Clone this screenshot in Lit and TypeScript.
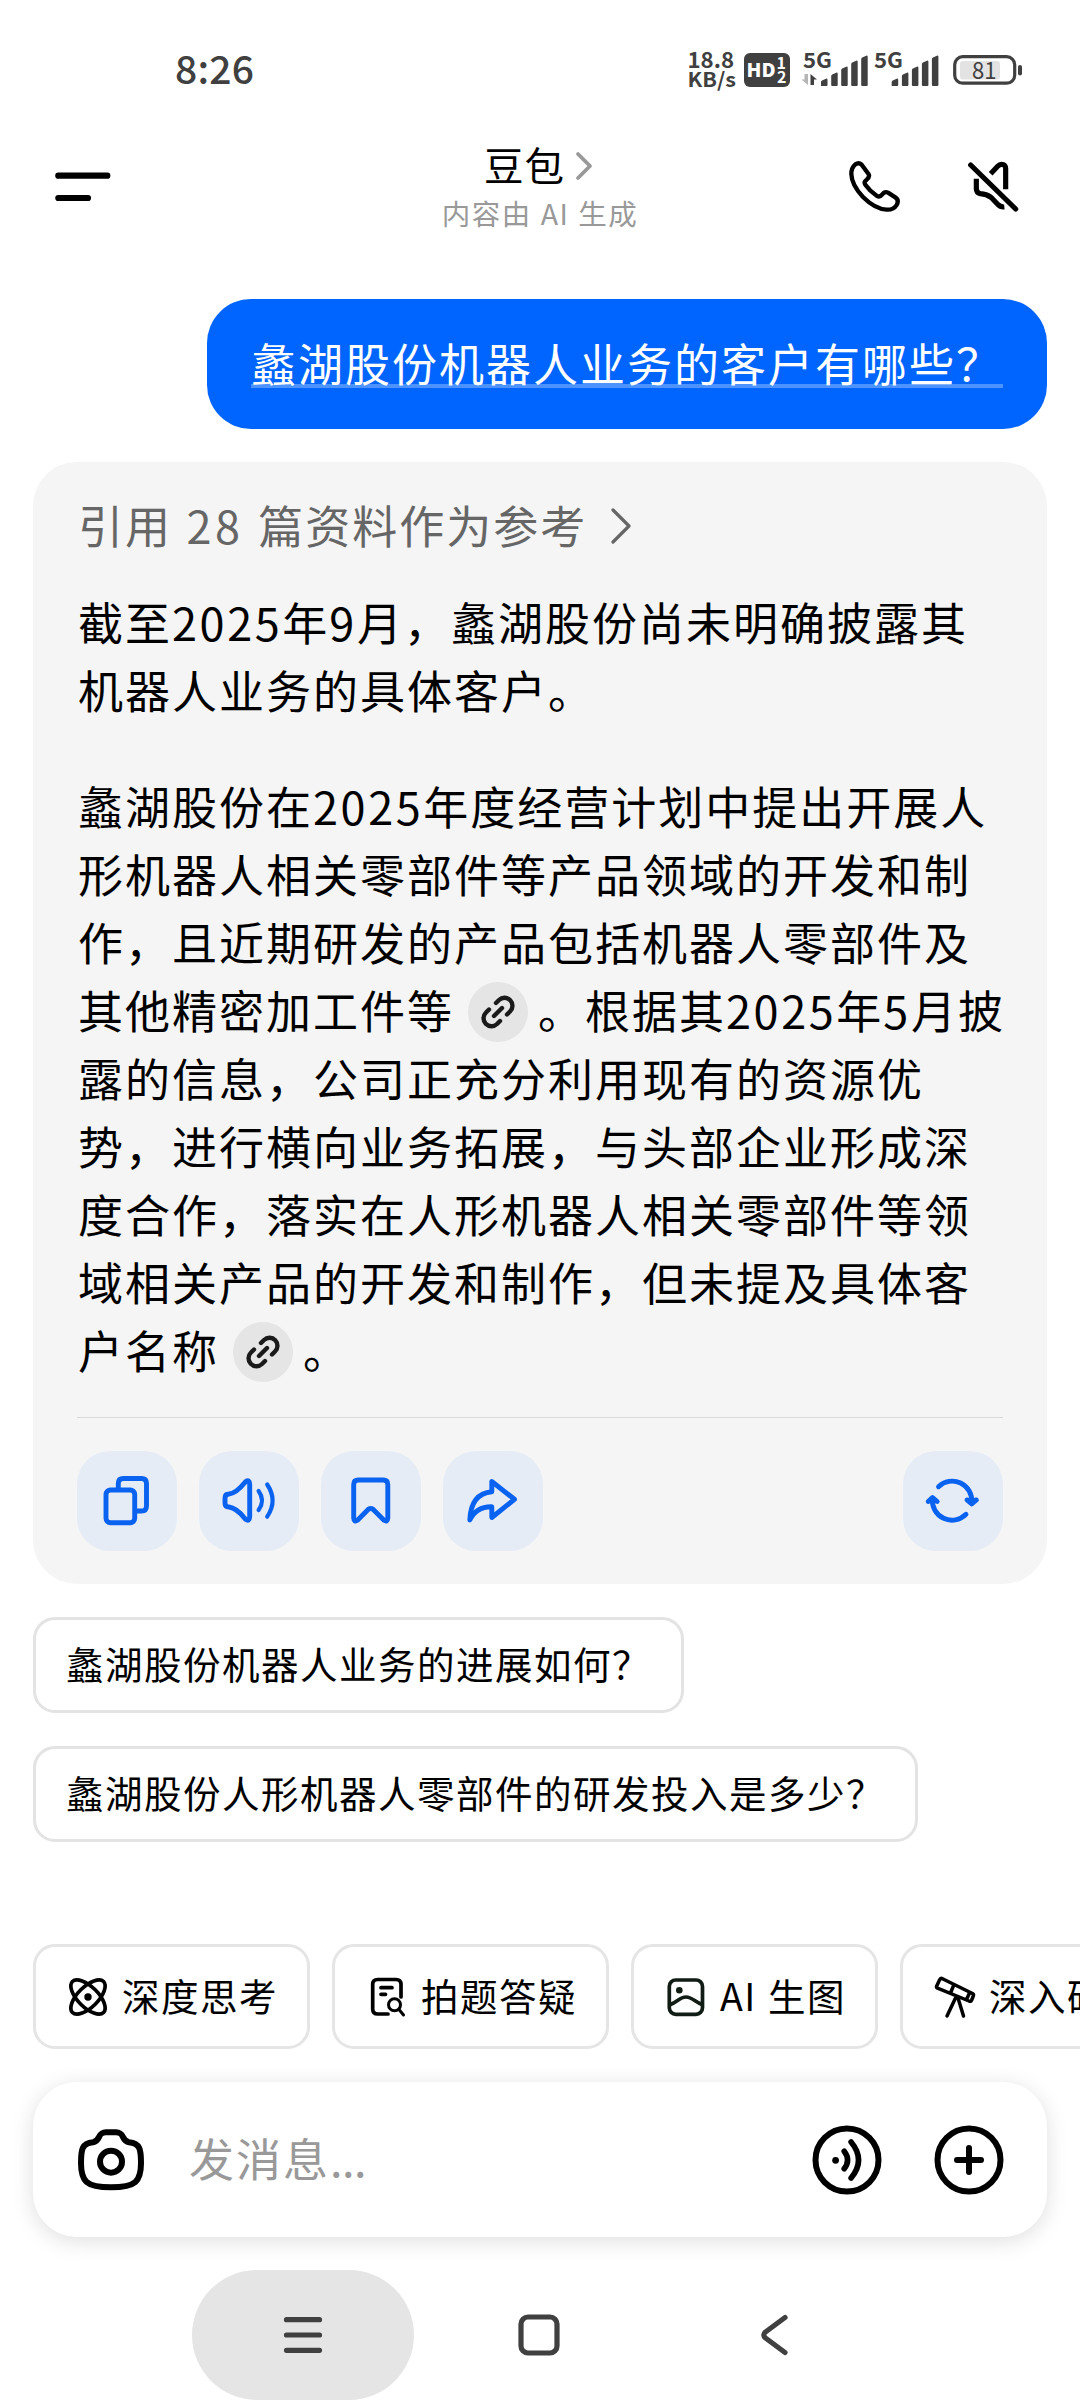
import { LitElement, html, svg, css } from "lit";
import { customElement, property } from "lit/decorators.js";

const signal = (x: number) => svg`
  <path fill="#404040" d="M${x} 86 v-4 q0-1 1-1.5 l4-1.8 q1.5-.4 1.5 1 V85 q0 1-1 1z
    M${x + 10.2} 85 v-9 q0-1 1-1.5 l4-1.8 q1.5-.4 1.5 1 V85 q0 1-1 1 h-4.5 q-1 0-1-1z
    M${x + 20.2} 85 v-15 q0-1 1-1.5 l4-1.8 q1.5-.4 1.5 1 V85 q0 1-1 1 h-4.5 q-1 0-1-1z
    M${x + 30.2} 85 v-21 q0-1 1-1.5 l4-1.8 q1.5-.4 1.5 1 V85 q0 1-1 1 h-4.5 q-1 0-1-1z
    M${x + 40.2} 85 v-26 q0-1 1-1.5 l4-1.8 q1.5-.4 1.5 1 V85 q0 1-1 1 h-4.5 q-1 0-1-1z"/>`;

@customElement("status-bar")
class StatusBar extends LitElement {
  static styles = css`
    :host { display: flex; justify-content: space-between; height: 140px; padding: 0 54px 0 175px;
      box-sizing: border-box; color: #404040; font-family: "Noto Sans CJK SC", sans-serif; }
    .time { font-size: 39px; font-weight: 500; line-height: 135px; letter-spacing: 0.2px; }
    .tray { display: block; width: 341px; height: 140px; }
    .tray text { font-family: "Noto Sans CJK SC", sans-serif; fill: #404040; }
    .tray .inverse { fill: #fff; }
  `;
  render() {
    return html`
      <div class="time">8:26</div>
      <svg class="tray" viewBox="685 0 341 140">
        <text x="687.5" y="68" font-size="22" font-weight="700" textLength="46.5" lengthAdjust="spacingAndGlyphs">18.8</text>
        <text x="687.5" y="86.5" font-size="20" font-weight="700" textLength="48.5" lengthAdjust="spacingAndGlyphs">KB/s</text>
        <rect x="744" y="53" width="46" height="34" rx="6" fill="#404040"/>
        <text class="inverse" x="746.5" y="77" font-size="19" font-weight="900" textLength="29" lengthAdjust="spacingAndGlyphs">HD</text>
        <text class="inverse" x="776.5" y="69" font-size="16" font-weight="700">1</text>
        <text class="inverse" x="777" y="83" font-size="16" font-weight="700">2</text>
        <text x="803" y="68" font-size="21" font-weight="700" textLength="29" lengthAdjust="spacingAndGlyphs">5G</text>
        <path fill="#b5b5b5" d="M804.5 74 h3.5 v11 l-6.5-5.5 h3z"/>
        <path fill="#404040" d="M810.5 74 l6.500 5.500 h-3 v5.500 h-3.500z"/>
        ${signal(821)}
        <text x="874" y="68" font-size="21" font-weight="700" textLength="29" lengthAdjust="spacingAndGlyphs">5G</text>
        ${signal(891.7)}
        <rect x="954.7" y="56.7" width="60" height="26.5" rx="8" fill="none" stroke="#404040" stroke-width="3.2"/>
        <rect x="960" y="61" width="40" height="18.5" rx="3" fill="#e3e3e3"/>
        <text x="972" y="79" font-size="23.5" textLength="24.5" lengthAdjust="spacingAndGlyphs">81</text>
        <rect x="1018" y="65" width="4" height="10.5" rx="2" fill="#404040"/>
      </svg>`;
  }
}

@customElement("chat-header")
class ChatHeader extends LitElement {
  static styles = css`
    :host { display: grid; grid-template-columns: 300px 1fr 300px; height: 159px; box-sizing: border-box;
      color: #000; font-family: "Noto Sans CJK SC", sans-serif; }
    .icon { display: block; fill: none; stroke: #000; stroke-linecap: round; stroke-linejoin: round; }
    .left { padding: 30px 0 0 53px; }
    .mid { display: flex; flex-direction: column; align-items: center; }
    .title { display: flex; align-items: center; gap: 10px; height: 50px; margin-top: -1px; padding-right: 3px;
      font-size: 39.5px; line-height: 50px; }
    .name { letter-spacing: 1px; }
    .title .icon { stroke: #999; margin-top: 4px; }
    .sub { font-size: 28.5px; line-height: 48px; letter-spacing: 1.5px; word-spacing: 1px; color: #999; }
    .right { display: flex; gap: 63px; padding: 18px 0 0 66px; }
  `;
  render() {
    return html`
      <div class="left">
        <svg class="icon" width="60" height="34" viewBox="53 170 60 34" stroke-width="6.2">
          <path d="M58.3 175.7 H107.3 M58.3 198 H88"/>
        </svg>
      </div>
      <div class="mid">
        <div class="title"><span class="name">豆包</span>
          <svg class="icon" width="18" height="30" viewBox="0 0 18 30" stroke-width="3.8"><path d="M3 3 L15 15 L3 27"/></svg>
        </div>
        <div class="sub">内容由 AI 生成</div>
      </div>
      <div class="right">
        <svg class="icon" width="56" height="56" viewBox="558 414 168 168" stroke-width="13">
          <path d="M586 433 Q596 426 605 434 L625 461 Q631 470 620 479 Q610 486 616 494 Q630 514 651 528 Q659 533 666 524 Q674 513 684 518 L706 532 Q718 540 710 555 Q701 570 680 569 Q645 567 609 531 Q575 495 574 462 Q574 443 586 433Z"/>
        </svg>
        <svg class="icon" width="56" height="56" viewBox="915 414 168 168" stroke-width="15.5">
          <path d="M932 435 L1067 567"/>
          <path stroke-linecap="butt" d="M992 461 L1013 439 Q1021 430 1030 434 Q1037 437 1037 446 V508 M949 476 V506 Q949 518 961 521 Q980 522 993 532 L1013 553 Q1021 562 1033 561"/>
        </svg>
      </div>`;
  }
}

@customElement("link-badge")
class LinkBadge extends LitElement {
  static styles = css`
    :host { display: inline-block; width: 60px; height: 60px; margin: 0 10px 0 14px; vertical-align: -13px; line-height: 0; }
    .dot { width: 60px; height: 60px; border-radius: 50%; background: #e5e5e5; }
    .icon { display: block; fill: none; stroke: #1a1a1a; stroke-width: 4.4; stroke-linecap: round; }
  `;
  render() {
    return html`<div class="dot"><svg class="icon" width="60" height="60" viewBox="0 0 60 60">
      <path d="M26 34 L34 26 M28 21 L31 18 A7.6 7.6 0 0 1 42 29.500 L39 32.500 M32 39 L29 42 A7.600 7.600 0 0 1 18 30.500 L21 27.500"/>
    </svg></div>`;
  }
}

const ACTIONS = [
  svg`<rect x="29" y="39" width="28.7" height="32.8" rx="4.5"/><path d="M41.3 37 V32.5 q0-5 5-5 H64.500 q5 0 5 5 V55 q0 5-5 5 H60"/>`,
  svg`<path d="M26 47 q0-4 4-4 C38 42 43 35 46.500 30.700 Q50.500 28 50.700 33 V66 Q50.500 71 46.500 68.300 C43 64 38 57 30 56 q-4 0-4-4z"/><path stroke-width="4.2" d="M59.600 40 Q66.500 49.500 59.600 59 M68.200 33.500 Q79 49.500 68.200 65.700"/>`,
  svg`<path d="M32.700 33.500 q0-4.500 4.500-4.500 H62.300 q4.500 0 4.500 4.500 V67 Q66.500 71.500 63 69.300 L52 58.300 q-2.300-1.800-4.600 0 L36.500 69.300 Q33 71.500 32.700 67z"/>`,
  svg`<path d="M48.800 30.500 V40.700 C35 42 27.500 51 26.800 69 C31.500 59 39 55.500 48.800 55.700 V66.500 L71.500 48.300z"/>`,
];
const REFRESH = svg`<path d="M35.500 35.700 A19.600 19.600 0 0 1 68.700 51.500 M63 63.300 A19.600 19.600 0 0 1 29.500 47.500"/><path fill="#0a62f0" d="M64 49 L68.700 53 L73.400 49 L68.700 50z M25.200 50.500 L29.500 46.500 L34.200 50.500 L29.500 49z"/>`;

@customElement("answer-card")
class AnswerCard extends LitElement {
  static styles = css`
    :host { display: block; margin: 33px 33px 0; padding: 29px 44px 33px; border-radius: 44px; background: #f5f5f5;
      font: 45px "Noto Sans CJK SC", sans-serif; letter-spacing: 2px; color: #000; }
    .refs { display: flex; align-items: center; gap: 23px; height: 68px; padding-left: 1px; line-height: 68px; color: #666;
      white-space: pre; word-spacing: 2.5px; }
    .refs .num { letter-spacing: 3.5px; }
    .refs svg { display: block; margin-top: 2px; fill: none; stroke: #666; stroke-width: 3.2; stroke-linecap: round; stroke-linejoin: round; }
    .para { margin: 29px 0 0; padding-left: 1px; }
    .para + .para { margin-top: 48px; }
    .line { display: block; height: 68px; line-height: 68px; white-space: nowrap; }
    .num { letter-spacing: 2.6px; }
    .rule { height: 1px; margin-top: 33px; background: #dadada; }
    .actions { display: flex; gap: 22px; margin-top: 33px; }
    .btn { width: 100px; height: 100px; border-radius: 33px; background: #e5ecf6; }
    .btn svg { display: block; fill: none; stroke: #0a62f0; stroke-width: 4.9; stroke-linecap: round; stroke-linejoin: round; }
    .btn:last-child { margin-left: auto; }
  `;
  // Digits are tracked slightly wider than the surrounding ideographs.
  private tracked(text: string) {
    return text.split(/(\d+)/).map((part) => (/^\d+$/.test(part) ? html`<span class="num">${part}</span>` : part));
  }
  render() {
    const link = html`<link-badge></link-badge>`;
    const t = (text: string) => this.tracked(text);
    const first = [t("截至2025年9月，蠡湖股份尚未明确披露其"), t("机器人业务的具体客户。")];
    const second = [
      t("蠡湖股份在2025年度经营计划中提出开展人"),
      t("形机器人相关零部件等产品领域的开发和制"),
      t("作，且近期研发的产品包括机器人零部件及"),
      [t("其他精密加工件等"), link, t("。根据其2025年5月披")],
      t("露的信息，公司正充分利用现有的资源优"),
      t("势，进行横向业务拓展，与头部企业形成深"),
      t("度合作，落实在人形机器人相关零部件等领"),
      t("域相关产品的开发和制作，但未提及具体客"),
      [t("户名称"), link, t("。")],
    ];
    const button = (icon: unknown) => html`<div class="btn"><svg width="100" height="100" viewBox="0 0 100 100">${icon}</svg></div>`;
    return html`
      <div class="refs"><span>${t("引用 28 篇资料作为参考")}</span><svg width="22" height="38" viewBox="0 0 22 38"><path d="M3 3 L19 19 L3 35"/></svg></div>
      <p class="para">${first.map((l) => html`<span class="line">${l}</span>`)}</p>
      <p class="para">${second.map((l) => html`<span class="line">${l}</span>`)}</p>
      <div class="rule"></div>
      <div class="actions">${ACTIONS.map(button)}${button(REFRESH)}</div>`;
  }
}

@customElement("tool-chip")
class ToolChip extends LitElement {
  @property() label = "";
  @property({ attribute: false }) icon: unknown = null;
  static styles = css`
    :host { display: flex; flex: none; align-items: center; gap: 12px; height: 105px; padding: 0 29px 0 30px; box-sizing: border-box;
      border: 3px solid #e5e5e5; border-radius: 22px; font: 37.5px "Noto Sans CJK SC", sans-serif; letter-spacing: 1.5px;
      word-spacing: 1.3px; white-space: nowrap; color: #000; }
    .icon { display: block; fill: none; stroke: #000; stroke-width: 3.7; stroke-linecap: round; stroke-linejoin: round; }
    .label { line-height: 44px; margin-top: -3px; }
  `;
  render() {
    return html`<svg class="icon" width="44" height="44" viewBox="0 0 44 44">${this.icon}</svg><span class="label">${this.label}</span>`;
  }
}

const CHIPS = [
  { label: "深度思考", icon: svg`<ellipse cx="22" cy="22" rx="22" ry="10.2" transform="rotate(45 22 22)"/><ellipse cx="22" cy="22" rx="22" ry="10.2" transform="rotate(-45 22 22)"/><circle cx="22" cy="22" r="3.7" fill="#000" stroke="none"/>` },
  { label: "拍题答疑", icon: svg`<path d="M36 22 V9.500 q0-5-5-5 H12.700 q-5 0-5 5 V34 q0 5 5 5 H23 M16 12.700 H27 M16 19.300 H20.500"/><circle cx="29.5" cy="29.7" r="6" stroke-width="3"/><path d="M34 34.500 L38.500 40" stroke-width="3"/>` },
  { label: "AI 生图", icon: svg`<g stroke="#101c14"><rect x="5.3" y="5" width="33.2" height="34.3" rx="6.5"/><path d="M6.500 29.500 C13 27 16 22 22 22 S31 27 38 29.500"/><circle cx="15.3" cy="15.3" r="3.3" fill="#101c14" stroke="none"/></g>` },
  { label: "深入研究", icon: svg`<g stroke-width="3.5"><path d="M9.500 3.700 L39.500 18.500 Q41 19.500 40.300 21 L38.700 25 Q37.800 27 36 26 L4.500 13.200 Q3 12.500 3.700 11 L6.500 5 Q7.500 2.800 9.500 3.700Z M21 9.500 L17.500 18 M36.500 18 L33.500 24.500 M22.500 23 L14 41 M25 23 L30.500 41"/></g>` },
];

@customElement("app-root")
class AppRoot extends LitElement {
  static styles = css`
    :host { display: flex; flex-direction: column; width: 1080px; height: 2400px; overflow: hidden; background: #fff;
      font-family: "Noto Sans CJK SC", sans-serif; color: #000; }
    .bubble { align-self: flex-end; box-sizing: border-box; height: 130px; margin-right: 33px; padding: 31px 44px 0;
      border-radius: 44px; background: #0065ff; color: #fff; }
    .question { display: block; height: 66px; line-height: 66px; font-size: 45px; letter-spacing: 2px; white-space: nowrap;
      background: linear-gradient(#4c93ff, #4c93ff) 0 54px / 100% 4px no-repeat; }
    .suggestions { display: flex; flex-direction: column; align-items: flex-start; gap: 33px; padding: 33px 33px 0; }
    .suggestion { box-sizing: border-box; height: 96px; padding: 0 30px; border: 3px solid #e3e3e3; border-radius: 22px;
      font-size: 37.5px; line-height: 85px; letter-spacing: 1.5px; white-space: nowrap; }
    .chips { display: flex; gap: 22px; margin-top: 102px; padding-left: 33px; }
    .composer { display: flex; align-items: center; box-sizing: border-box; height: 155px; margin: 33px 33px 0; padding: 0 42px 0 45px;
      border-radius: 44px; background: #fff; box-shadow: 0 4px 22px rgba(0, 0, 0, 0.13); }
    .composer svg { display: block; fill: none; stroke: #000; stroke-width: 6; stroke-linecap: round; stroke-linejoin: round; }
    .hint { flex: 1; margin: -4px 0 0 45px; color: #999; font-size: 45px; letter-spacing: 2px; line-height: 60px; }
    .dots { letter-spacing: -0.5px; }
    .round + .round { margin-left: 50px; }
    .nav { display: flex; align-items: center; height: 130px; margin-top: 33px; padding-left: 192px; }
    .nav svg { display: block; fill: none; stroke: #404040; stroke-width: 5.2; stroke-linecap: round; stroke-linejoin: round; }
    .key { display: flex; align-items: center; justify-content: center; width: 222px; height: 130px; border-radius: 65px; }
    .key + .key { margin-left: 14px; }
    .pressed { background: #e5e5e5; }
  `;
  render() {
    return html`
      <status-bar></status-bar>
      <chat-header></chat-header>
      <div class="bubble"><span class="question">蠡湖股份机器人业务的客户有哪些？</span></div>
      <answer-card></answer-card>
      <div class="suggestions">
        <div class="suggestion">蠡湖股份机器人业务的进展如何？</div>
        <div class="suggestion">蠡湖股份人形机器人零部件的研发投入是多少？</div>
      </div>
      <div class="chips">${CHIPS.map((c) => html`<tool-chip .label=${c.label} .icon=${c.icon}></tool-chip>`)}</div>
      <div class="composer">
        <svg width="66" height="66" viewBox="0 0 66 66">
          <path d="M28 5.200 H38 C47 5.200 43 14 51 15.300 C62 16.500 63 22 63 36 C63 54 58 60.300 33 60.300 C8 60.300 3 54 3 36 C3 22 4 16.500 15 15.300 C23 14 19 5.200 28 5.200Z"/>
          <circle cx="33" cy="34.7" r="11"/>
        </svg>
        <div class="hint">发消息<span class="dots">...</span></div>
        <svg class="round" width="72" height="72" viewBox="-36 -36 72 72">
          <circle r="31.5"/><circle cx="-11.4" cy="0.3" r="3.4" fill="#000" stroke="none"/>
          <path stroke-width="5.6" d="M-2.800 -8.800 Q4 0 -2.800 8.800 M4.100 -18 Q19 0 4.100 18"/>
        </svg>
        <svg class="round" width="72" height="72" viewBox="-36 -36 72 72">
          <circle r="31.5"/><path d="M-12 0 H12 M0 -12 V12"/>
        </svg>
      </div>
      <div class="nav">
        <div class="key pressed"><svg width="44" height="44" viewBox="0 0 44 44"><path d="M5.500 6.700 H38.500 M5.500 22 H38.500 M5.500 37.300 H38.500"/></svg></div>
        <div class="key"><svg width="44" height="44" viewBox="0 0 44 44"><rect x="4" y="4" width="36" height="36" rx="7"/></svg></div>
        <div class="key"><svg width="44" height="44" viewBox="0 0 44 44"><path d="M32 4.500 L12.500 19 Q9 22 12.500 25 L32 39.500"/></svg></div>
      </div>`;
  }
}
